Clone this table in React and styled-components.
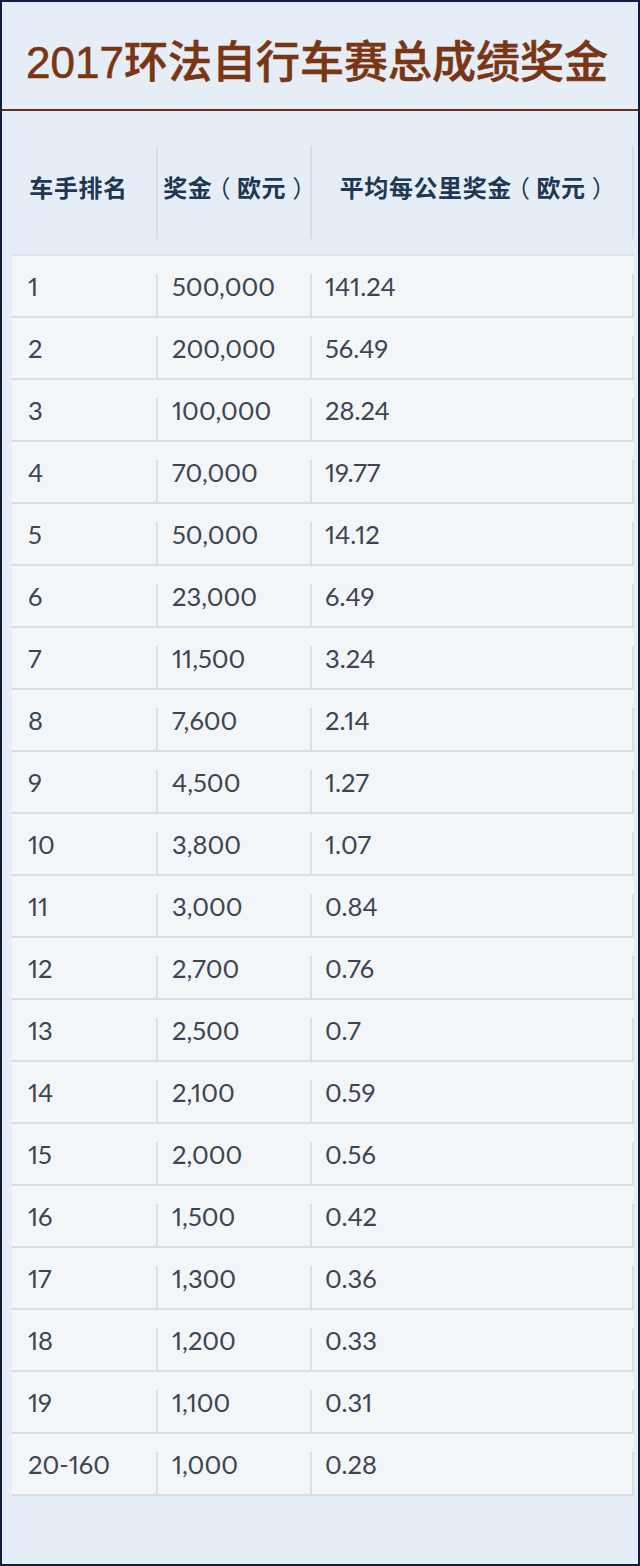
import React from 'react';
import styled, { createGlobalStyle } from 'styled-components';

const GlobalStyle = createGlobalStyle`
  html, body {
    margin: 0;
    padding: 0;
    background: #e5eef6;
  }
`;

const Frame = styled.div`
  width: 640px;
  height: 1566px;
  box-sizing: border-box;
  border: 2px solid #101f3d;
  background: #e5eef6;
  display: flex;
  flex-direction: column;
`;

const TitleBar = styled.div`
  height: 109px;
  display: flex;
  align-items: center;
  justify-content: center;
  padding-top: 6px;
  padding-right: 6px;
  box-sizing: border-box;
  border-bottom: 2px solid #6e2c12;
`;

const Title = styled.h1`
  margin: 0;
  font-family: "Liberation Sans", "Noto Sans CJK SC", sans-serif;
  font-weight: 500;
  font-size: 44px;
  color: #7a3514;
  -webkit-text-stroke: 0.6px #7a3514;
`;

const Table = styled.div`
  display: flex;
  flex-direction: column;
  padding: 0 4px 0 10px;
`;

const HeadRow = styled.div`
  height: 143px;
  display: grid;
  grid-template-columns: 145px 154px 322px;
  border-bottom: 2px solid #dbe2e9;
`;

const HeadCell = styled.div`
  position: relative;
  display: flex;
  align-items: center;
  justify-content: center;
  padding-top: 8px;
  padding-right: ${p => p.$shift || 0}px;
  padding-left: ${p => (p.$shift ? 0 : 6)}px;
  font-family: "Noto Sans CJK SC", sans-serif;
  font-weight: 700;
  font-size: 24px;
  color: #1f3753;
  letter-spacing: 0.6px;
  white-space: nowrap;

  &::after {
    content: '';
    position: absolute;
    right: -1px;
    top: 35px;
    bottom: 15px;
    width: 2px;
    background: #d6dfe8;
  }
`;

const Paren = styled.span`
  font-weight: 400;
  font-feature-settings: "halt" 1;
  padding: 0 6px;
`;

const Row = styled.div`
  height: 62px;
  box-sizing: border-box;
  display: grid;
  grid-template-columns: 145px 154px 322px;
  background: #f2f6f9;
  border-bottom: 2px solid #d8dee4;
`;

const Cell = styled.div`
  position: relative;
  display: flex;
  align-items: center;
  padding-left: ${p => p.$pad}px;
  font-family: "Lato", "Open Sans", sans-serif;
  font-variant-numeric: proportional-nums;
  font-size: 25.5px;
  color: #3d4551;

  &::after {
    content: '';
    position: absolute;
    right: -1px;
    top: 18px;
    bottom: 0;
    width: 2px;
    background: #dadfe3;
  }
`;

const Filler = styled.div`
  flex: 1;
`;

const rows = [
  ['1', '500,000', '141.24'],
  ['2', '200,000', '56.49'],
  ['3', '100,000', '28.24'],
  ['4', '70,000', '19.77'],
  ['5', '50,000', '14.12'],
  ['6', '23,000', '6.49'],
  ['7', '11,500', '3.24'],
  ['8', '7,600', '2.14'],
  ['9', '4,500', '1.27'],
  ['10', '3,800', '1.07'],
  ['11', '3,000', '0.84'],
  ['12', '2,700', '0.76'],
  ['13', '2,500', '0.7'],
  ['14', '2,100', '0.59'],
  ['15', '2,000', '0.56'],
  ['16', '1,500', '0.42'],
  ['17', '1,300', '0.36'],
  ['18', '1,200', '0.33'],
  ['19', '1,100', '0.31'],
  ['20-160', '1,000', '0.28'],
];

const Euro = ({ label }) => (
  <span>
    {label}<Paren>（</Paren>欧元<Paren>）</Paren>
  </span>
);

export default function App() {
  return (
    <>
      <GlobalStyle />
      <Frame>
        <TitleBar>
          <Title>2017环法自行车赛总成绩奖金</Title>
        </TitleBar>
        <Table>
          <HeadRow>
            <HeadCell $shift={12}>车手排名</HeadCell>
            <HeadCell><Euro label="奖金" /></HeadCell>
            <HeadCell><Euro label="平均每公里奖金" /></HeadCell>
          </HeadRow>
          {rows.map(r => (
            <Row key={r[0]}>
              <Cell $pad={16}>{r[0]}</Cell>
              <Cell $pad={15}>{r[1]}</Cell>
              <Cell $pad={14}>{r[2]}</Cell>
            </Row>
          ))}
        </Table>
        <Filler />
      </Frame>
    </>
  );
}
